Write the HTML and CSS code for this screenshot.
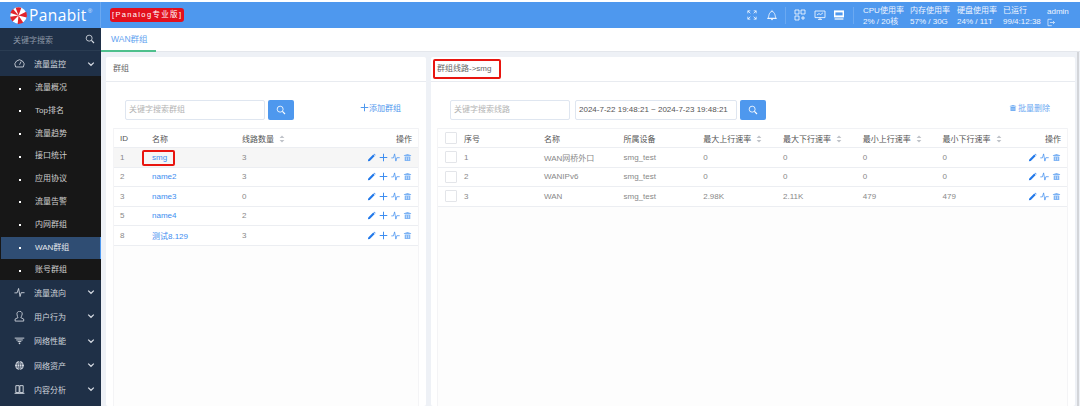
FILE: index.html
```html
<!DOCTYPE html>
<html lang="zh">
<head>
<meta charset="utf-8">
<title>Panabit WAN群组</title>
<link rel="stylesheet" href="styles.css">
</head>
<body>
<svg class="defs" width="0" height="0">
  <symbol id="i-edit" viewBox="0 0 10 10"><path d="M1 9.3 1.4 7.2 6.9 1.7 8.6 3.4 3.1 8.9Z M7.4 1.2 8 .7 9.6 2.3 9.1 2.9Z" fill="currentColor"/></symbol>
  <symbol id="i-plus" viewBox="0 0 10 10"><path d="M5 .8V9.2M.8 5H9.2" stroke="currentColor" stroke-width="1.1" fill="none"/></symbol>
  <symbol id="i-pulse" viewBox="0 0 10 10"><path d="M.3 5.4H2.7L4 1 5.4 9 6.5 5.2H9.7" stroke="currentColor" stroke-width=".8" fill="none"/></symbol>
  <symbol id="i-trash" viewBox="0 0 10 10"><path d="M1 2.6 5 1.1 9 2.6V3.2H1Z M1.9 3.9H8.1V8.9H1.9Z" fill="currentColor"/><path d="M3.8 4.8V8M6.2 4.8V8" stroke="#fff" stroke-width=".6"/></symbol>
  <symbol id="i-search" viewBox="0 0 12 12"><circle cx="5" cy="5" r="3.6" fill="none" stroke="currentColor" stroke-width="1"/><path d="M7.7 7.7 10.8 10.8" stroke="currentColor" stroke-width="1.4"/></symbol>
  <symbol id="i-chev" viewBox="0 0 8 8"><path d="M1.2 2.6 4 5.3 6.8 2.6" fill="none" stroke="currentColor" stroke-width="1.2"/></symbol>
  <symbol id="i-sort" viewBox="0 0 6 8"><path d="M3 .4 5.4 3H.6ZM3 7.6 .6 5H5.4Z" fill="currentColor"/></symbol>
</svg>

<header class="topbar">
  <div class="brand">
    <svg class="logo" viewBox="0 0 20 20"><circle cx="10" cy="10" r="9.6" fill="#fff"/><path d="M10 10 6.6 .8A10 10 0 0 1 13.4 .8ZM10 10 18.9 5.6A10 10 0 0 1 19.6 12.4ZM10 10 15.6 18.3A10 10 0 0 1 9 19.9ZM10 10 3 17.2A10 10 0 0 1 .2 11.5ZM10 10 .5 7A10 10 0 0 1 3.6 2.3Z" fill="#e0222c"/></svg>
    <span class="brand-name">Panabit</span><sup class="reg">®</sup>
  </div>
  <div class="edition">[Panalog专业版]</div>
  <div class="top-right">
    <svg class="ti ti-a" viewBox="0 0 12 12"><path d="M1 4V1H4M8 1H11V4M11 8V11H8M4 11H1V8M1 1 4 4M11 1 8 4M11 11 8 8M1 11 4 8" fill="none" stroke="#fff" stroke-width=".9"/></svg>
    <svg class="ti ti-b" viewBox="0 0 12 12"><path d="M2 9.3C3 8 2.6 3 6 2.4 9.4 3 9 8 10 9.3ZM1.2 9.4H10.8M5 10.6H7M5.6 1.4H6.4" fill="none" stroke="#fff" stroke-width=".8"/></svg>
    <span class="vsep"></span>
    <svg class="ti ti-c" viewBox="0 0 12 12"><path d="M1 1H5V5H1ZM7 1H11V5H7ZM1 7H5V11H1ZM9 7V11M7 9H11" fill="none" stroke="#fff" stroke-width=".8"/></svg>
    <svg class="ti ti-d" viewBox="0 0 12 12"><path d="M1 2H11V8.6H1ZM4 10.4H8M6 8.6V10.4M3 6 5 4.6 6.6 5.6 9 3.8" fill="none" stroke="#fff" stroke-width=".8"/></svg>
    <svg class="ti ti-e" viewBox="0 0 12 12"><path d="M1 1.4H11V8.4H1Z" fill="#fff"/><path d="M2.4 3.4H9.6V6.4H2.4Z" fill="#4e98ee"/><path d="M1.6 10H10.4" stroke="#fff" stroke-width="1.2"/></svg>
    <span class="vsep vsep-b"></span>
    <div class="stat stat-cpu"><span>CPU使用率</span><span>2% / 20核</span></div>
    <div class="stat stat-mem"><span>内存使用率</span><span>57% / 30G</span></div>
    <div class="stat stat-disk"><span>硬盘使用率</span><span>24% / 11T</span></div>
    <div class="stat stat-up"><span>已运行</span><span>99/4:12:38</span></div>
    <div class="stat stat-user"><span>admin</span>
      <svg class="logout" viewBox="0 0 10 10"><path d="M6 1H1.2V9H6M3.6 5H9.4M7.6 3.2 9.4 5 7.6 6.8" fill="none" stroke="#fff" stroke-width=".8"/></svg>
    </div>
  </div>
</header>

<div class="body">
  <aside class="sidebar">
    <div class="side-search"><span>关键字搜索</span><svg class="side-search-icon"><use href="#i-search"/></svg></div>
    <div class="group group-first">
      <svg class="gi" viewBox="0 0 12 12"><path d="M1.8 9.8A5 5 0 1 1 10.2 9.8ZM6 7.4 7.8 3.8" fill="none" stroke="#d8dde5" stroke-width=".9"/></svg>
      <span class="glabel">流量监控</span><svg class="chev"><use href="#i-chev"/></svg>
    </div>
    <ul class="subnav">
      <li>流量概况</li><li>Top排名</li><li>流量趋势</li><li>接口统计</li><li>应用协议</li><li>流量告警</li><li>内网群组</li>
      <li class="active">WAN群组</li><li>账号群组</li>
    </ul>
    <div class="group">
      <svg class="gi" viewBox="0 0 12 12"><path d="M.5 6.4H3.4L5 1.6 6.6 10.4 7.8 6.2H11.5" fill="none" stroke="#d8dde5" stroke-width=".9"/></svg>
      <span class="glabel">流量流向</span><svg class="chev"><use href="#i-chev"/></svg>
    </div>
    <div class="group">
      <svg class="gi" viewBox="0 0 12 12"><path d="M3.4 4.2A2.9 2.9 0 1 1 8.6 4.6C8.4 6 7.6 6.6 7.4 7.2L10.6 8.8V11H1.2V8.8L4.4 7.2C4 6.4 3.4 5.6 3.4 4.2Z" fill="none" stroke="#d8dde5" stroke-width=".9"/></svg>
      <span class="glabel">用户行为</span><svg class="chev"><use href="#i-chev"/></svg>
    </div>
    <div class="group">
      <svg class="gi" viewBox="0 0 12 12"><path d="M.8 3.4H11.2M2.4 5.4H9.6M4 7.2H8" fill="none" stroke="#d8dde5" stroke-width="1"/><circle cx="6" cy="9.2" r=".9" fill="#d8dde5"/></svg>
      <span class="glabel">网络性能</span><svg class="chev"><use href="#i-chev"/></svg>
    </div>
    <div class="group">
      <svg class="gi" viewBox="0 0 12 12"><circle cx="6" cy="6" r="4.8" fill="#d8dde5"/><path d="M1.2 4.4H10.8M1.2 7.6H10.8M6 1.2V10.8M6 1.2C3 4 3 8 6 10.8M6 1.2C9 4 9 8 6 10.8" fill="none" stroke="#1f3047" stroke-width=".6"/></svg>
      <span class="glabel">网络资产</span><svg class="chev"><use href="#i-chev"/></svg>
    </div>
    <div class="group">
      <svg class="gi" viewBox="0 0 12 12"><path d="M2 1.8H5.6V9.4H2ZM6.4 1.8H10V9.4H6.4ZM.6 10.2H11.4" fill="none" stroke="#d8dde5" stroke-width="1"/></svg>
      <span class="glabel">内容分析</span><svg class="chev"><use href="#i-chev"/></svg>
    </div>
  </aside>

  <main class="main">
    <nav class="tabs"><div class="tab">WAN群组</div></nav>
    <div class="panels">
      <section class="panel panel-left">
        <div class="panel-title">群组</div>
        <div class="toolbar">
          <div class="input input-group">关键字搜索群组</div>
          <button class="btn-search"><svg><use href="#i-search"/></svg></button>
          <a class="add"><svg class="add-plus"><use href="#i-plus"/></svg>添加群组</a>
        </div>
        <div class="grid-box">
        <table class="grid">
          <thead><tr>
            <th class="c-id">ID</th><th class="c-name">名称</th>
            <th class="c-count">线路数量<svg class="sort"><use href="#i-sort"/></svg></th><th class="c-ops">操作</th>
          </tr></thead>
          <tbody>
            <tr class="hl"><td>1</td><td class="link">smg</td><td>3</td><td class="c-ops"><svg class="a a-edit"><use href="#i-edit"/></svg><svg class="a"><use href="#i-plus"/></svg><svg class="a"><use href="#i-pulse"/></svg><svg class="a a-trash"><use href="#i-trash"/></svg></td></tr>
            <tr><td>2</td><td class="link">name2</td><td>3</td><td class="c-ops"><svg class="a a-edit"><use href="#i-edit"/></svg><svg class="a"><use href="#i-plus"/></svg><svg class="a"><use href="#i-pulse"/></svg><svg class="a a-trash"><use href="#i-trash"/></svg></td></tr>
            <tr><td>3</td><td class="link">name3</td><td>0</td><td class="c-ops"><svg class="a a-edit"><use href="#i-edit"/></svg><svg class="a"><use href="#i-plus"/></svg><svg class="a"><use href="#i-pulse"/></svg><svg class="a a-trash"><use href="#i-trash"/></svg></td></tr>
            <tr><td>5</td><td class="link">name4</td><td>2</td><td class="c-ops"><svg class="a a-edit"><use href="#i-edit"/></svg><svg class="a"><use href="#i-plus"/></svg><svg class="a"><use href="#i-pulse"/></svg><svg class="a a-trash"><use href="#i-trash"/></svg></td></tr>
            <tr><td>8</td><td class="link">测试8.129</td><td>3</td><td class="c-ops"><svg class="a a-edit"><use href="#i-edit"/></svg><svg class="a"><use href="#i-plus"/></svg><svg class="a"><use href="#i-pulse"/></svg><svg class="a a-trash"><use href="#i-trash"/></svg></td></tr>
          </tbody>
        </table>
        </div>
        <span class="mark mark-smg"></span>
      </section>

      <section class="panel panel-right">
        <div class="panel-title">群组线路-&gt;smg</div>
        <div class="toolbar">
          <div class="input input-line">关键字搜索线路</div>
          <div class="input input-date">2024-7-22 19:48:21 ~ 2024-7-23 19:48:21</div>
          <button class="btn-search"><svg><use href="#i-search"/></svg></button>
          <a class="bulk"><svg class="bulk-icon"><use href="#i-trash"/></svg>批量删除</a>
        </div>
        <div class="grid-box">
        <table class="grid">
          <thead><tr>
            <th class="r-check"><span class="check"></span></th><th class="r-no">序号</th><th class="r-name">名称</th><th class="r-dev">所属设备</th>
            <th class="r-rate">最大上行速率<svg class="sort"><use href="#i-sort"/></svg></th>
            <th class="r-rate">最大下行速率<svg class="sort"><use href="#i-sort"/></svg></th>
            <th class="r-rate">最小上行速率<svg class="sort"><use href="#i-sort"/></svg></th>
            <th class="r-rate">最小下行速率<svg class="sort"><use href="#i-sort"/></svg></th>
            <th class="c-ops">操作</th>
          </tr></thead>
          <tbody>
            <tr><td class="r-check"><span class="check"></span></td><td>1</td><td>WAN网桥外口</td><td>smg_test</td><td>0</td><td>0</td><td>0</td><td>0</td><td class="c-ops"><svg class="a a-edit"><use href="#i-edit"/></svg><svg class="a"><use href="#i-pulse"/></svg><svg class="a a-trash"><use href="#i-trash"/></svg></td></tr>
            <tr><td class="r-check"><span class="check"></span></td><td>2</td><td>WANIPv6</td><td>smg_test</td><td>0</td><td>0</td><td>0</td><td>0</td><td class="c-ops"><svg class="a a-edit"><use href="#i-edit"/></svg><svg class="a"><use href="#i-pulse"/></svg><svg class="a a-trash"><use href="#i-trash"/></svg></td></tr>
            <tr><td class="r-check"><span class="check"></span></td><td>3</td><td>WAN</td><td>smg_test</td><td>2.98K</td><td>2.11K</td><td>479</td><td>479</td><td class="c-ops"><svg class="a a-edit"><use href="#i-edit"/></svg><svg class="a"><use href="#i-pulse"/></svg><svg class="a a-trash"><use href="#i-trash"/></svg></td></tr>
          </tbody>
        </table>
        </div>
        <span class="mark mark-title"></span>
      </section>
    </div>
    <span class="scrollbar"></span>
  </main>
</div>
</body>
</html>
```

FILE: styles.css
```css
* { box-sizing: border-box; }
html, body { margin: 0; height: 406px; overflow: hidden; background: #fff; }
body { font-family: "Liberation Sans", "Noto Sans CJK SC", sans-serif; font-size: 8px; color: #666; padding-top: 2px; }
.defs { position: absolute; }

/* top bar */
.topbar { height: 26px; background: #4e98ee; display: flex; align-items: center; color: #fff; }
.brand { width: 101px; display: flex; align-items: center; padding-left: 10px; border-right: 1px solid #6ba9f1; height: 100%; }
.logo { width: 17px; height: 17px; margin-right: 2px; flex: none; }
.brand-name { font-family: "Open Sans", sans-serif; font-size: 15.5px; letter-spacing: .4px; color: #fff; }
.reg { font-size: 6px; margin: -8px 0 0 1px; opacity: .8; }
.edition { margin-left: 9px; height: 14px; line-height: 14px; padding: 0 2px; background: #e3101d; color: #fff; border-radius: 3px; font-size: 7.5px; letter-spacing: 1.35px; white-space: nowrap; }
.top-right { margin-left: auto; display: flex; align-items: center; height: 100%; }
.ti { flex: none; width: 10px; height: 10px; }
.ti-a { margin-right: 9px; }
.ti-b { width: 12px; height: 12px; margin-right: 7px; }
.ti-c { width: 12px; height: 12px; margin-left: 8px; margin-right: 8px; }
.ti-d { width: 12px; height: 12px; margin-right: 7px; }
.ti-e { width: 12px; height: 12px; }
.vsep { width: 1px; height: 17px; background: #6ba9f1; }
.vsep-b { margin-left: 8px; margin-right: 9px; }
.stat { display: flex; flex-direction: column; line-height: 11px; font-size: 8px; color: #eef5fe; white-space: nowrap; padding-top: 2px; }
.stat-cpu { width: 47px; }
.stat-mem { width: 47px; }
.stat-disk { width: 46px; }
.stat-up { width: 44px; }
.stat-user { width: 33px; }
.logout { width: 8px; height: 9px; margin-top: 1px; }

/* layout */
.body { display: flex; height: 378px; }

/* sidebar */
.sidebar { width: 101px; flex: none; background: #1f3047; color: #cfd5dc; }
.side-search { height: 23px; padding: 0 6px 0 13px; display: flex; align-items: center; justify-content: space-between; color: #8d98a6; border-bottom: 1px solid #2a3c52; }
.side-search-icon { width: 10px; height: 10px; color: #d8dde5; }
.group { height: 24.3px; display: flex; align-items: center; padding-left: 14px; position: relative; }
.group-first { height: 25px; }
.gi { width: 11px; height: 11px; flex: none; }
.glabel { margin-left: 9px; }
.chev { width: 8px; height: 8px; position: absolute; right: 6px; top: 50%; margin-top: -4px; color: #d8dde5; }
.subnav { list-style: none; margin: 0; padding: 1px 0 0; background: #171717; height: 204px; }
.subnav li { height: 22.8px; line-height: 22.8px; padding-left: 35px; position: relative; color: #cfcfcf; }
.subnav li::before { content: ""; position: absolute; left: 19px; top: 10.5px; width: 2px; height: 2px; background: #fff; }
.subnav .active { background: #2f4d73; border-right: 1px solid #4e98ee; margin-left: 1px; padding-left: 34px; color: #e6e9ee; }
.subnav .active::before { left: 18px; }

/* main */
.main { flex: 1; position: relative; background: #eef1f6; display: flex; flex-direction: column; min-width: 0; }
.tabs { height: 24px; background: #fff; border-bottom: 1px solid #e4e7ec; flex: none; }
.tab { width: 55px; height: 24px; line-height: 22px; padding-left: 10px; color: #5fa3f0; font-size: 8.5px; border-bottom: 2px solid #4fc08d; }
.panels { flex: 1; padding: 5px 5px 0 5px; display: flex; gap: 5px; min-height: 0; }
.panel { background: #fff; position: relative; border-radius: 2px; display: flex; flex-direction: column; }
.panel-left { width: 320px; flex: none; }
.panel-right { flex: 1; min-width: 0; }
.panel-title { height: 25px; line-height: 24px; padding-left: 7px; border-bottom: 1px solid #e8ebf0; color: #666; font-size: 8px; flex: none; }
.panel-right .panel-title { padding-left: 6px; }
.toolbar { display: flex; align-items: center; height: 20px; margin-top: 18px; padding: 0 25px 0 19px; flex: none; }
.input { height: 20px; line-height: 18px; padding-left: 3px; border: 1px solid #dfe6f0; border-radius: 2px; color: #b3b3b3; font-size: 8px; }
.input-group { width: 140px; }
.input-line { width: 120px; }
.input-date { width: 162px; margin-left: 5px; color: #555; }
.btn-search { width: 26px; height: 20px; margin-left: 3px; padding: 0; border: 0; border-radius: 2px; background: #4e98ee; color: #fff; display: flex; align-items: center; justify-content: center; }
.btn-search svg { width: 10px; height: 10px; }
.add, .bulk { margin-left: auto; display: flex; align-items: center; margin-bottom: 5px; }
.add { color: #4e98ee; }
.add-plus { width: 9px; height: 9px; stroke-width: 1.4; }
.bulk { color: #6aa9f2; }
.bulk-icon { width: 8px; height: 8px; margin-right: 1px; }

/* tables */
.grid-box { flex: 1; margin: 8px 7px 0 6px; background: #fdfdfd; border-left: 1px solid #f4f4f6; border-right: 1px solid #f4f4f6; min-height: 0; }
.panel-left .grid-box { margin-left: 7px; }
.grid { border-collapse: collapse; table-layout: fixed; width: 100%; font-size: 8px; }
.grid th { height: 19px; padding: 0 0 0 6px; text-align: left; font-weight: 400; color: #555; background: #fff; border-top: 1px solid #f1f2f5; border-bottom: 1px solid #eceef2; white-space: nowrap; }
.grid td { height: 19.5px; padding: 0 0 0 6px; color: #888; background: #fff; border-bottom: 1px solid #eceef2; white-space: nowrap; }
.grid tr.hl td { background: #f6f6f6; }
.grid .link { color: #3d8df0; }
.c-id { width: 32px; }
.c-name { width: 90px; }
.c-count { width: 90px; }
.grid .c-ops { text-align: right; padding-right: 6px; }
.sort { width: 6px; height: 8px; margin-left: 5px; color: #bfc3c9; vertical-align: -1px; }
.a { width: 9px; height: 9px; margin-left: 3px; color: #3d8df0; vertical-align: -1.5px; }
.a-edit { color: #2279ea; }
.a-trash { color: #7db3f4; }
.r-check { width: 20px; }
.grid th.r-check, .grid td.r-check { padding-left: 7px; }
.check { display: block; width: 12px; height: 12px; border: 1px solid #e3e5e9; border-radius: 1px; background: #fff; }
.r-no { width: 80px; }
.r-name { width: 79.5px; }
.r-dev { width: 79.7px; }
.r-rate { width: 79.8px; }

/* red annotation frames */
.mark { position: absolute; border: 2px solid #e8150f; border-radius: 2px; }
.mark-smg { left: 36px; top: 93px; width: 33px; height: 16px; }
.mark-title { left: 2px; top: 2px; width: 68px; height: 20px; }

.scrollbar { position: absolute; right: 1px; top: 24px; width: 2px; height: 354px; background: #d3d5d9; }
```
